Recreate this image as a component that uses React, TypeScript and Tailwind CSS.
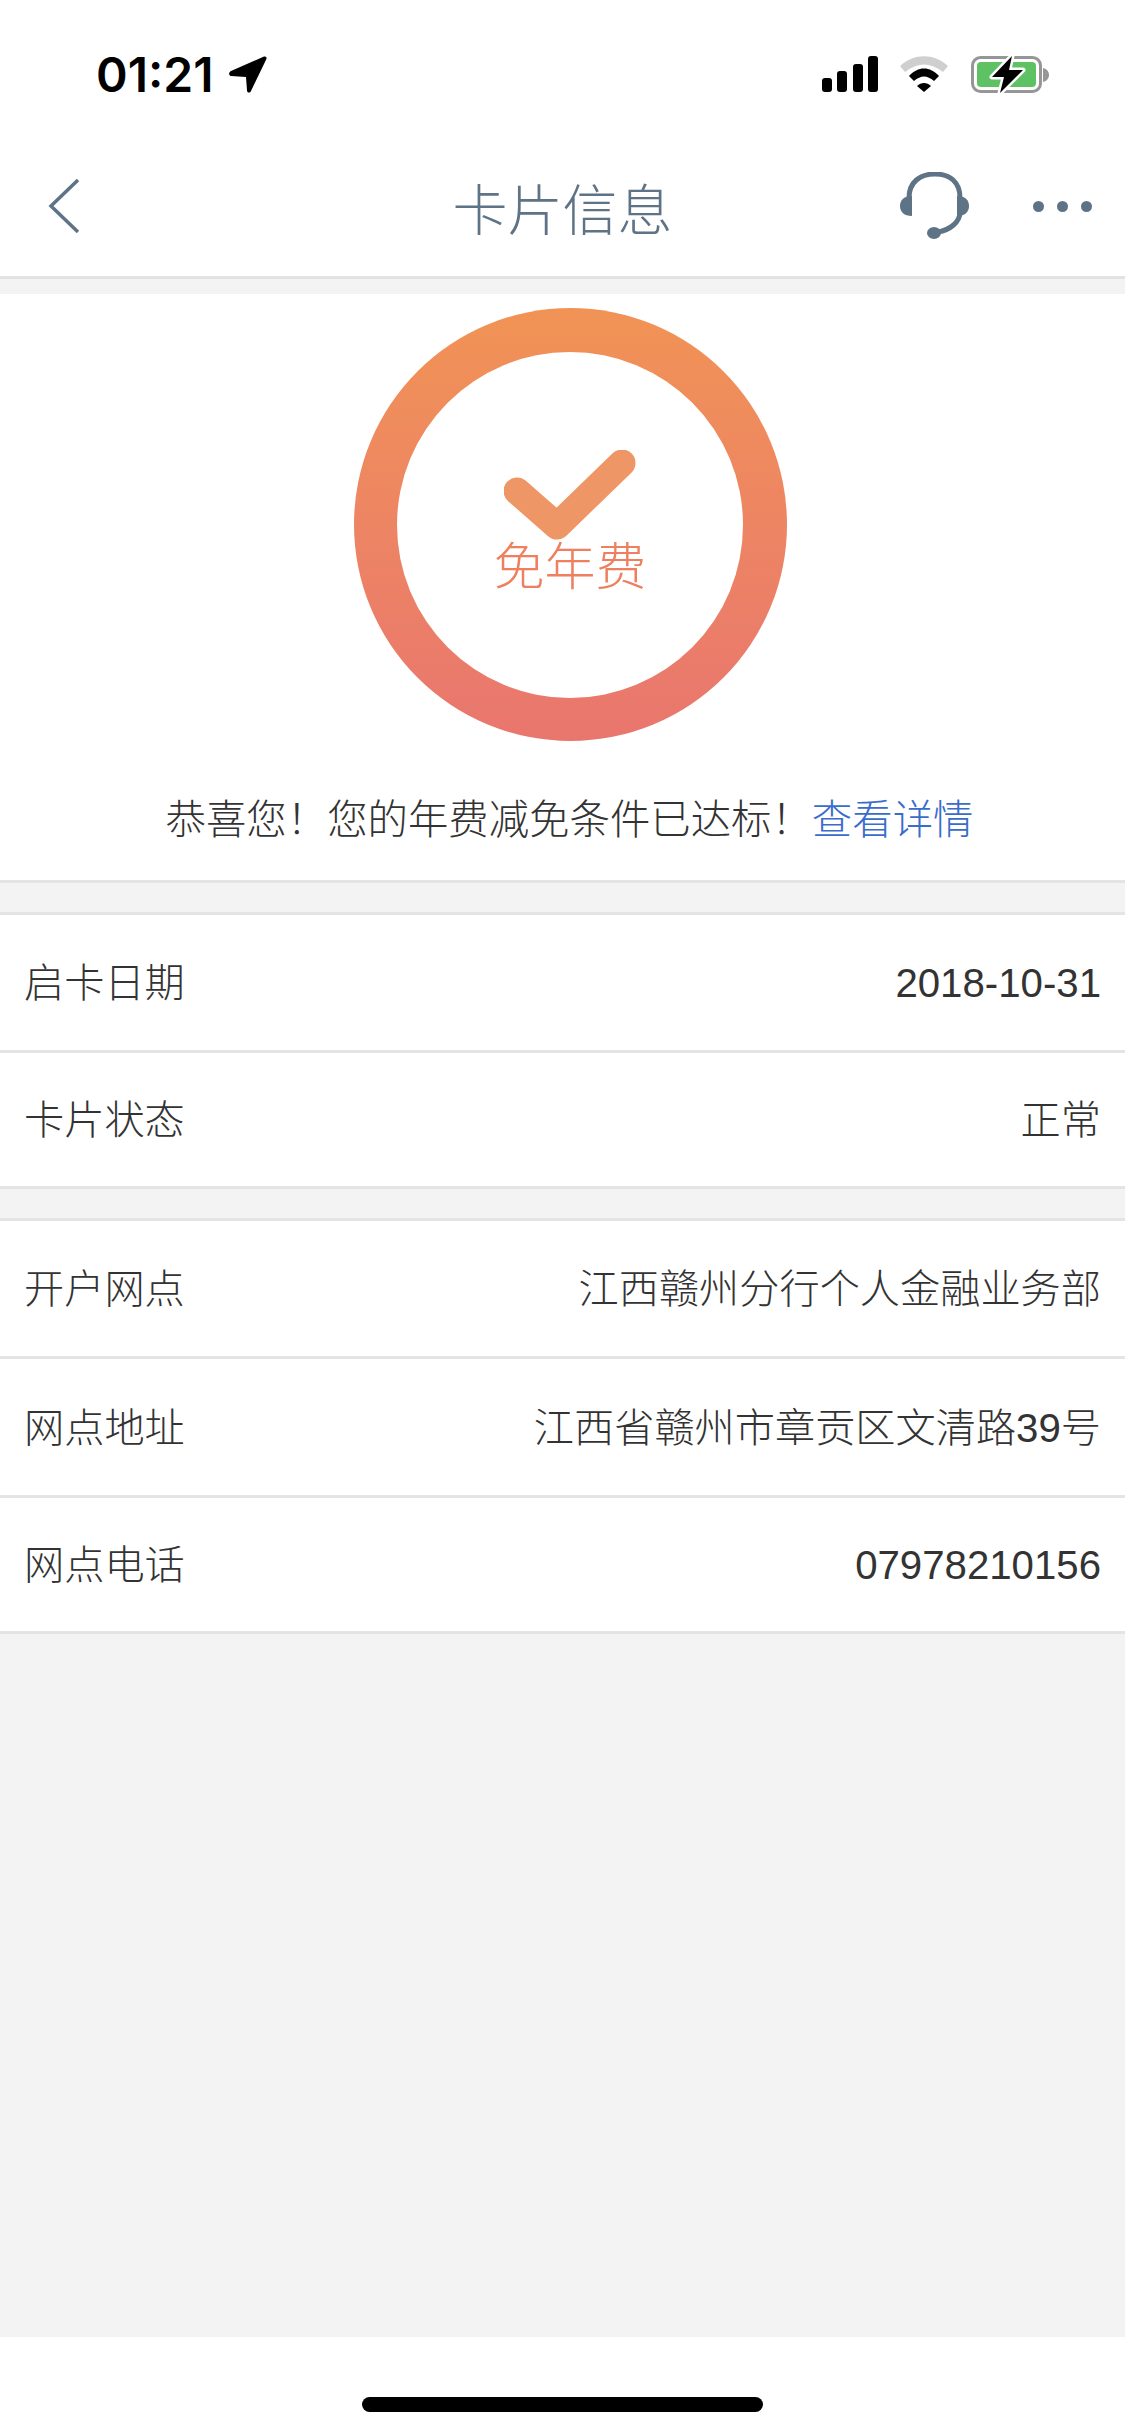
const cjk = "font-['Liberation_Sans','Noto_Sans_CJK_SC',sans-serif]";

function Row({ label, value, height }: { label: string; value: string; height: string }) {
  return (
    <div className={`flex items-center justify-between border-b-[3px] border-[#e4e4e4] bg-white px-[24px] pt-[4px] text-[40.2px] font-light text-[#333333] ${height}`}>
      <span>{label}</span>
      <span>{value}</span>
    </div>
  );
}

function StatusIcons() {
  return (
    <div className="flex items-start">
      <svg width="56" height="36" viewBox="0 0 56 36" fill="#000">
        <rect x="0" y="22" width="10" height="14" rx="3" />
        <rect x="15" y="15" width="10" height="21" rx="3" />
        <rect x="31" y="8" width="10" height="28" rx="3" />
        <rect x="46" y="0" width="10" height="36" rx="3" />
      </svg>
      <svg className="ml-[22px]" width="48" height="36" viewBox="0 0 48 36">
        <path d="M0 10C14 -3 34 -3 48 10L43 16C30 6 18 6 5 16Z" fill="#cfcfcf" />
        <path d="M9 20C18 10 30 10 39 20L34 25C27 19 21 19 14 25Z" fill="#000" />
        <path d="M17 30C21 26 27 26 31 30L24 36Z" fill="#000" />
      </svg>
      <svg className="ml-[23px] overflow-visible" width="78" height="38" viewBox="0 0 78 38" fill="none">
        <rect x="1.5" y="1.5" width="68" height="34" rx="8" stroke="#969696" strokeWidth="3" />
        <rect x="6" y="6" width="59" height="25" rx="4" fill="#5ec264" />
        <path d="M72 12C76 13 78 16 78 19C78 22 76 25 72 26Z" fill="#969696" />
        <path d="M41 0L21 21H33L29 37L52 14H38Z" fill="#000" stroke="#ffffff" strokeWidth="5" strokeLinejoin="round" paintOrder="stroke" />
      </svg>
    </div>
  );
}

export default function App() {
  return (
    <div className={`flex h-[2435px] w-[1125px] flex-col overflow-hidden bg-[#f3f3f3] ${cjk}`}>
      {/* status bar */}
      <div className="flex h-[140px] items-start justify-between bg-white pl-[96px] pr-[76px] pt-[56px]">
        <div className="flex items-center">
          <span className="font-['Inter',sans-serif] text-[48px] font-semibold leading-[38px] text-black">01:21</span>
          <svg className="ml-[16px]" width="38" height="38" viewBox="0 0 38 38" fill="#000">
            <path d="M35 0.6C37 0 38 1.4 37.4 3L22 35C21 37.4 18 37 18 34.6L17 21L2 20C-0.5 19.8 -0.5 16 2 15Z" />
          </svg>
        </div>
        <StatusIcons />
      </div>

      {/* nav */}
      <div className="grid h-[139px] grid-cols-[1fr_auto_1fr] items-center border-b-[3px] border-[#e2e2e2] bg-white pb-[4px]">
        <svg className="ml-[48px]" width="32" height="54" viewBox="0 0 32 54" fill="none" stroke="#5f7386" strokeWidth="3.5">
          <path d="M30 1L3 27L30 53" />
        </svg>
        <div className="pt-[10px] text-[55px] font-light leading-[64px] text-[#5f7386]">卡片信息</div>
        <div className="flex items-center justify-end pr-[33px]">
          <svg width="70" height="68" viewBox="0 0 70 68" fill="none">
            <path d="M9 26C9 10 20 2 35 2C50 2 60 10 60 26" stroke="#5f7386" strokeWidth="5" />
            <path d="M60 40C60 50 50 58 38 60" stroke="#5f7386" strokeWidth="5" />
            <path d="M12 24V44C4 44 0 40 0 34C0 28 4 24 12 24Z" fill="#5f7386" />
            <path d="M57 24V44C65 44 69 40 69 34C69 28 65 24 57 24Z" fill="#5f7386" />
            <ellipse cx="34" cy="61" rx="7" ry="6" fill="#5f7386" />
          </svg>
          <div className="ml-[63px] flex gap-[13px]">
            <div className="h-[11px] w-[11px] rounded-full bg-[#5f7386]" />
            <div className="h-[11px] w-[11px] rounded-full bg-[#5f7386]" />
            <div className="h-[11px] w-[11px] rounded-full bg-[#5f7386]" />
          </div>
        </div>
      </div>

      {/* fee status */}
      <div className="mt-[15px] flex flex-col items-center border-b-[3px] border-[#e4e4e4] bg-white pb-[32px] pt-[14px]">
        <div className="ml-[15px] flex h-[433px] w-[433px] items-center justify-center rounded-full bg-gradient-to-b from-[#f19355] to-[#e9766e]">
          <div className="flex h-[346px] w-[346px] flex-col items-center rounded-full bg-white pt-[98px]">
            <svg width="132" height="92" viewBox="0 0 132 92" fill="none">
              <path d="M13 41L53 76L118 13" stroke="#ef9666" strokeWidth="27" strokeLinecap="round" strokeLinejoin="round" />
            </svg>
            <div className="-mt-[4px] text-[51px] font-light leading-[60px] text-[#ee7f5f]">免年费</div>
          </div>
        </div>
        <div className="ml-[14px] mt-[51px] text-[40.4px] font-light leading-[56px] text-[#333333]">
          {"恭喜您\uFF01您的年费减免条件已达标\uFF01"}<span className="text-[#3a6ccc]">查看详情</span>
        </div>
      </div>

      <div className="mt-[29px] border-t-[3px] border-[#e4e4e4]">
        <Row label="启卡日期" value="2018-10-31" height="h-[138px]" />
        <Row label="卡片状态" value="正常" height="h-[136px]" />
      </div>

      <div className="mt-[29px] border-t-[3px] border-[#e4e4e4]">
        <Row label="开户网点" value="江西赣州分行个人金融业务部" height="h-[138px]" />
        <Row label="网点地址" value="江西省赣州市章贡区文清路39号" height="h-[139px]" />
        <Row label="网点电话" value="07978210156" height="h-[136px]" />
      </div>

      <div className="flex-1" />

      {/* home indicator */}
      <div className="flex h-[98px] justify-center bg-white pt-[60px]">
        <div className="h-[15px] w-[401px] rounded-full bg-black" />
      </div>
    </div>
  );
}
